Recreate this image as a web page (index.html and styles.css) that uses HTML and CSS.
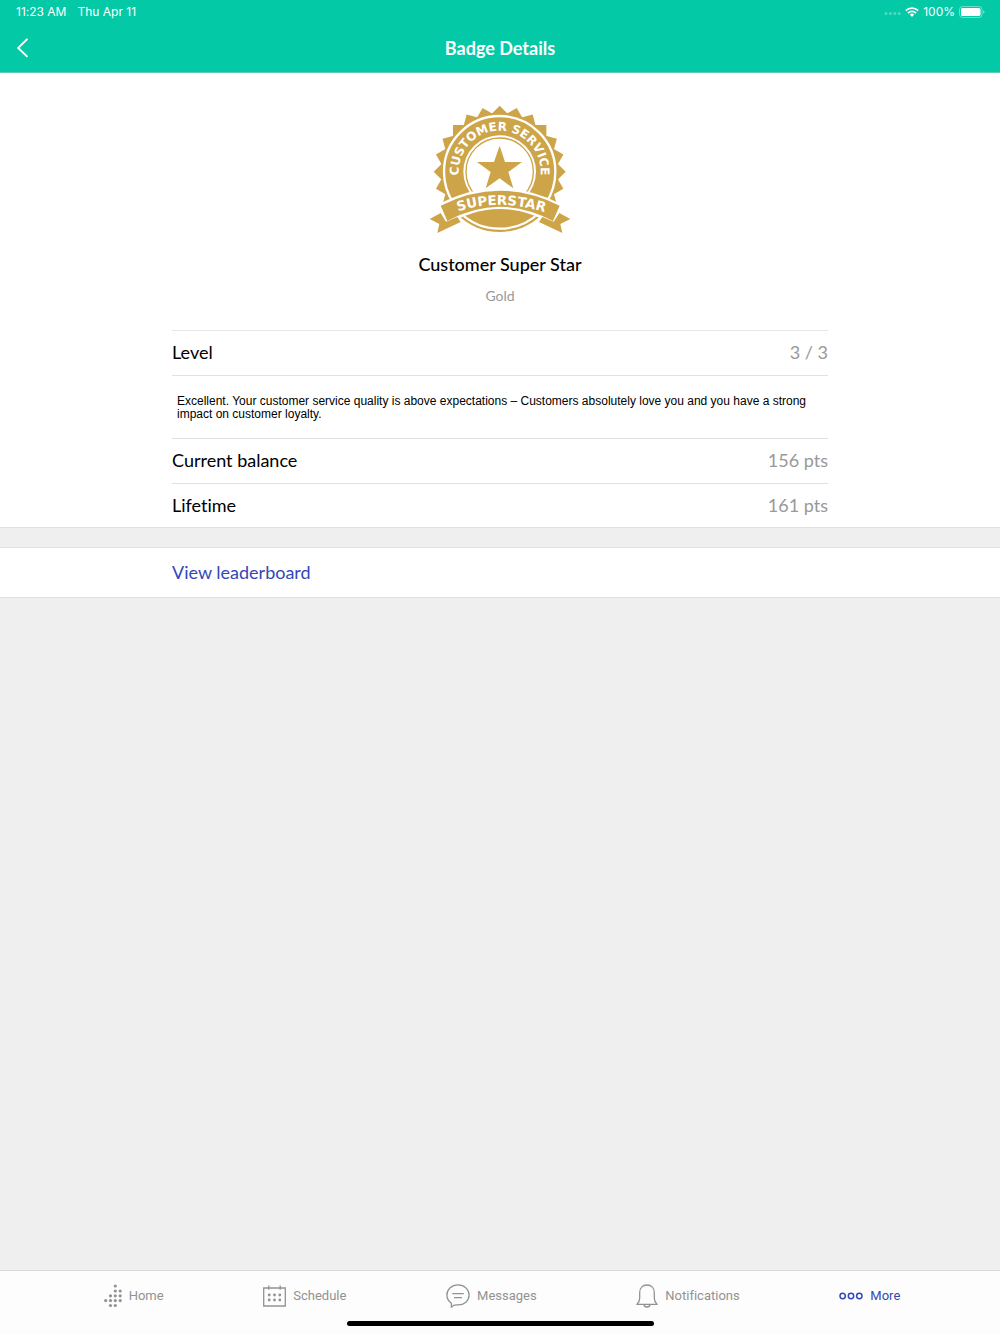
FILE: index.html
```html
<!DOCTYPE html>
<html lang="en">
<head>
<meta charset="utf-8">
<meta name="viewport" content="width=device-width, initial-scale=1">
<title>Badge Details</title>
<link rel="stylesheet" href="styles.css">
</head>
<body>
<header class="top">
  <div class="status">
    <div class="status-group">
      <span>11:23 AM</span>
      <span>Thu Apr 11</span>
    </div>
    <div class="status-group status-right">
      <svg width="17" height="6" viewBox="0 0 17 6" fill="#fff" fill-opacity=".3" aria-hidden="true"><circle cx="2" cy="4.500" r="1.500"/><circle cx="6.400" cy="4.500" r="1.500"/><circle cx="10.800" cy="4.500" r="1.500"/><circle cx="15.200" cy="4.500" r="1.500"/></svg>
      <svg class="wifi" width="14" height="10" viewBox="0 0 14 10" aria-hidden="true"><g fill="none" stroke="#fff" stroke-width="1.9"><path d="M.8 3.7a8.8 8.8 0 0 1 12.4 0"/><path d="M3 6.1a5.6 5.6 0 0 1 8 0"/></g><path d="M4.8 7.6a3.1 3.1 0 0 1 4.4 0L7 9.9z" fill="#fff"/></svg>
      <span>100%</span>
      <svg width="26" height="12" viewBox="0 0 26 12" aria-hidden="true"><rect x=".5" y=".5" width="22.5" height="11" rx="3" fill="none" stroke="#fff" stroke-opacity=".4"/><rect x="2" y="2" width="19.5" height="8" rx="1.6" fill="#fff"/><path d="M24.2 4.2q1.3.6 1.3 1.8t-1.3 1.8z" fill="#fff" fill-opacity=".5"/></svg>
    </div>
  </div>
  <div class="titlebar">
    <button class="back" type="button" aria-label="Back">
      <svg width="12" height="20" viewBox="0 0 12 20" fill="none" stroke="#fff" stroke-width="1.9"><path d="M11.4.9 2.200 9.900l9.200 8.900"/></svg>
    </button>
    <h1 class="title">Badge Details</h1>
  </div>
</header>

<main class="content">
  <section class="panel details">
    <div class="column">
      <div class="hero">
        <svg class="badge" width="160" height="150" viewBox="0 0 480 450" role="img" aria-label="Customer service superstar badge">
          <defs>
            <clipPath id="teeth"><path d="M0 0H480V322H0z"/></clipPath>
            <clipPath id="base"><path d="M80 390Q239 294 400 390V450H80z"/></clipPath>
            <path id="arc" d="M154 319A123 123 0 1 1 324 319"/>
            <path id="ribbon-line" d="M80 361Q239 297 408 364"/>
          </defs>
          <g fill="#cda548">
            <g clip-path="url(#teeth)">
              <g transform="translate(239 230)">
                <path id="sq" d="M0-198 198 0 0 198-198 0z"/>
                <use href="#sq" transform="rotate(15)"/>
                <use href="#sq" transform="rotate(30)"/>
                <use href="#sq" transform="rotate(45)"/>
                <use href="#sq" transform="rotate(60)"/>
                <use href="#sq" transform="rotate(75)"/>
              </g>
              <circle cx="239" cy="230" r="167" fill="none" stroke="#fff" stroke-width="7"/>
            </g>
            <circle cx="239" cy="230" r="109" fill="#fff"/>
            <circle cx="239" cy="230" r="101" fill="none" stroke="#cda548" stroke-width="4"/>
            <path d="M239 152 255 201 306 201 265 231 280 280 239 250 197 280 212 231 171 201 222 201z"/>
            <path d="M56 328Q239 232 424 328L400 450H80z" fill="#fff"/>
            <g clip-path="url(#base)">
              <circle cx="239" cy="230" r="181"/>
              <circle cx="239" cy="230" r="171" fill="none" stroke="#fff" stroke-width="7"/>
            </g>
            <path d="M62 354 29 372 58 387 52 414 122 381 112 366 78 380zM418 354 451 372 421 387 427 414 357 381 367 366 401 380z"/>
            <path d="M62 332Q239 242 419 332L399 378Q239 293 82 378z"/>
          </g>
          <g class="badge-text">
            <text font-size="36" text-anchor="middle"><textPath href="#arc" startOffset="50%">CUSTOMER SERVICE</textPath></text>
            <text font-size="40" text-anchor="middle"><textPath href="#ribbon-line" startOffset="50%">SUPERSTAR</textPath></text>
          </g>
        </svg>
        <h2 class="badge-name">Customer Super Star</h2>
        <p class="badge-tier">Gold</p>
      </div>
      <dl class="facts">
        <div class="row"><dt>Level</dt><dd>3 / 3</dd></div>
        <div class="note"><dd>Excellent. Your customer service quality is above expectations – Customers absolutely love you and you have a strong impact on customer loyalty.</dd></div>
        <div class="row"><dt>Current balance</dt><dd>156 pts</dd></div>
        <div class="row"><dt>Lifetime</dt><dd>161 pts</dd></div>
      </dl>
    </div>
  </section>
  <section class="panel action">
    <div class="column"><a class="leaderboard" href="#leaderboard">View leaderboard</a></div>
  </section>
</main>

<footer class="bottom">
  <nav class="tabs">
    <a class="tab" href="#home">
      <svg width="18" height="24" viewBox="0 0 18 24" fill="#929292" aria-hidden="true"><circle cx="11.3" cy="2" r="1.6"/><circle cx="11.3" cy="7" r="1.6"/><circle cx="16.2" cy="7" r="1.6"/><circle cx="6.5" cy="11.8" r="1.6"/><circle cx="11.3" cy="11.8" r="1.6"/><circle cx="16.2" cy="11.8" r="1.6"/><circle cx="1.7" cy="16.6" r="1.6"/><circle cx="6.5" cy="16.6" r="1.6"/><circle cx="11.3" cy="16.6" r="1.6"/><circle cx="16.2" cy="16.6" r="1.6"/><circle cx="6.5" cy="21.5" r="1.6"/><circle cx="11.3" cy="21.5" r="1.6"/></svg>
      <span>Home</span>
    </a>
    <a class="tab" href="#schedule">
      <svg width="23" height="22" viewBox="0 0 23 22" aria-hidden="true"><path d="M.7 3h21.6v18H.7zM5.8.5v4.3M17.2.5v4.3" fill="none" stroke="#929292" stroke-width="1.3"/><g fill="#929292"><circle cx="6.2" cy="10" r="1.4"/><circle cx="11.5" cy="10" r="1.4"/><circle cx="16.8" cy="10" r="1.4"/><circle cx="6.2" cy="15" r="1.4"/><circle cx="11.5" cy="15" r="1.4"/><circle cx="16.8" cy="15" r="1.4"/></g></svg>
      <span>Schedule</span>
    </a>
    <a class="tab" href="#messages">
      <svg width="24" height="24" viewBox="0 0 24 24" fill="none" stroke="#929292" stroke-width="1.3" aria-hidden="true"><path d="M12 .9C5.8.9.9 5.3.9 11c0 3.6 1.7 6.3 4.5 8.2v3.9c1.5-1.6 2.9-2.2 5-2.2H12c6.2 0 11.1-4.1 11.1-9.8S18.2.9 12 .9z"/><path d="M6.3 9.7h11.5M8 13.7h8"/></svg>
      <span>Messages</span>
    </a>
    <a class="tab" href="#notifications">
      <svg width="22" height="24" viewBox="0 0 22 24" fill="none" stroke="#929292" stroke-width="1.3" stroke-linejoin="round" aria-hidden="true"><path d="M11 1C6.5 1 3.7 4.2 3.7 8.5v5.7c0 2.8-.9 4.3-2.8 6.2h20.2c-1.9-1.9-2.8-3.4-2.8-6.2V8.5C18.3 4.2 15.5 1 11 1zM8 20.600c.3 3.200 5.700 3.200 6 0"/></svg>
      <span>Notifications</span>
    </a>
    <a class="tab tab-active" href="#more" aria-current="page">
      <svg width="24" height="8" viewBox="0 0 24 8" fill="none" stroke="#3348b8" stroke-width="1.5" aria-hidden="true"><circle cx="3.7" cy="4" r="2.7"/><circle cx="12" cy="4" r="2.7"/><circle cx="20.3" cy="4" r="2.7"/></svg>
      <span>More</span>
    </a>
  </nav>
  <div class="home-indicator"></div>
</footer>
</body>
</html>
```
FILE: styles.css
```css
* {
  box-sizing: border-box;
  margin: 0;
  padding: 0;
}

body {
  display: flex;
  flex-direction: column;
  min-height: 100vh;
  background: #efefef;
  color: #000;
  font-family: Lato, sans-serif;
  font-size: 18px;
  font-variant-ligatures: none;
  line-height: 24px;
}

a {
  text-decoration: none;
}

.top {
  background: #03c9a6;
  border-bottom: 1px solid #5fcdb6;
  color: #fff;
}

.status {
  display: flex;
  justify-content: space-between;
  padding: 0 15px 0 16px;
  font-family: Inter, sans-serif;
  font-size: 12px;
}

.status-group {
  display: flex;
  align-items: center;
  gap: 11px;
}

.status-right {
  gap: 4px;
}

.titlebar {
  display: grid;
  grid-template-columns: 48px 1fr 48px;
  align-items: center;
  height: 48px;
}

.back {
  display: flex;
  padding: 8px 16px;
  border: 0;
  background: none;
}

.title {
  text-align: center;
  font-size: 18px;
  font-weight: 700;
}

.content {
  flex: 1;
}

.panel {
  background: #fff;
  border-bottom: 1px solid #dfdfdf;
}

.column {
  width: 100%;
  max-width: 656px;
  margin: 0 auto;
}

.hero {
  display: flex;
  flex-direction: column;
  align-items: center;
  padding: 22px 0;
}

.badge-text {
  fill: #fff;
  font-family: "DejaVu Sans", sans-serif;
  font-weight: 700;
}

.badge-name {
  margin-top: 7px;
  font-size: 18px;
  font-weight: 500;
}

.badge-tier {
  margin-top: 8px;
  color: #999;
  font-size: 14px;
}

.facts {
  border-top: 1px solid #e6e6e6;
}

.row {
  display: flex;
  align-items: center;
  justify-content: space-between;
  height: 44px;
  padding-bottom: 2px;
}

.row dd {
  color: #999;
}

.row + .row {
  border-top: 1px solid #e1e1e1;
}

.note {
  padding: 19px 5px 17px;
  border: solid #e1e1e1;
  border-width: 1px 0;
  font-family: "Liberation Sans", Arial, sans-serif;
  font-size: 12px;
  line-height: 13px;
}

.action {
  margin-top: 19px;
  border-top: 1px solid #dfdfdf;
}

.leaderboard {
  display: block;
  padding: 12px 0 13px;
  color: #3348b8;
}

.bottom {
  padding-bottom: 8px;
  background: #fdfdfd;
  border-top: 1px solid #dadada;
}

.tabs {
  display: flex;
  justify-content: space-evenly;
  height: 49px;
  padding-left: 4px;
}

.tab {
  display: flex;
  align-items: center;
  gap: 7px;
  color: #929292;
  font-family: Roboto, sans-serif;
  font-size: 13px;
}

.tab-active {
  color: #3348b8;
}

.home-indicator {
  width: 307px;
  height: 5px;
  margin: 1px auto 0;
  border-radius: 3px;
  background: #000;
}
```
